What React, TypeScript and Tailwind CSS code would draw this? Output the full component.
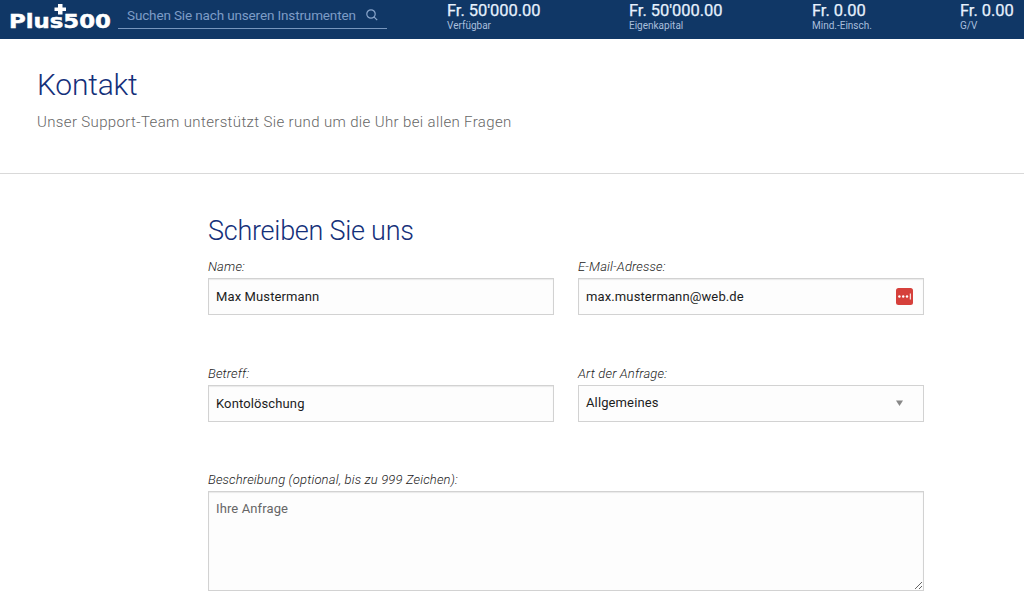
import { useState } from 'react'
import type { ReactNode } from 'react'

const balances = [
  { value: "Fr. 50'000.00", label: 'Verfügbar', width: 'w-[182px]' },
  { value: "Fr. 50'000.00", label: 'Eigenkapital', width: 'w-[183px]' },
  { value: 'Fr. 0.00', label: 'Mind.-Einsch.', width: 'w-[148px]' },
  { value: 'Fr. 0.00', label: 'G/V', width: 'w-[64px]' },
]

const inputClass =
  'block h-[37px] w-full rounded-none border border-[#d2d2d2] bg-[#fdfdfd] px-[7px] text-[13px] leading-[17px] tracking-[0.12px] text-[#1c1c1c] shadow-[inset_0_1px_1px_rgba(0,0,0,0.08)] outline-none'

function Logo() {
  return (
    <svg width="104" height="36" viewBox="0 0 104 36" className="shrink-0" aria-label="Plus500">
      <text
        x="-1"
        y="27.5"
        fill="#fff"
        stroke="#fff"
        strokeWidth="0.5"
        fontSize="20"
        fontWeight="700"
        fontFamily="'DejaVu Sans', sans-serif"
        textLength="102"
        lengthAdjust="spacingAndGlyphs"
      >
        Plus500
      </text>
      <path d="M48 4h4.5v3.5h3.5v3.5h-3.5v3.5h-4.5v-3.5h-3.5v-3.5h3.5z" fill="#fff" />
    </svg>
  )
}

function Field({ label, children }: { label: string; children: ReactNode }) {
  return (
    <label className="block">
      <span className="block h-[20px] text-[13px] font-light italic leading-[17px] tracking-[0.16px] text-[#222]">
        {label}
      </span>
      {children}
    </label>
  )
}

export default function App() {
  const [name, setName] = useState('Max Mustermann')
  const [email, setEmail] = useState('max.mustermann@web.de')
  const [subject, setSubject] = useState('Kontolöschung')

  return (
    <div className="h-[597px] w-[1024px] overflow-hidden bg-white font-['Roboto',sans-serif]">
      <header className="flex h-[39px] items-start bg-[#103766] pl-[10px]">
        <Logo />
        <div className="ml-[4px] flex h-[29px] w-[269px] items-center justify-between border-b border-[#7896bd] pl-[9px] pr-[9px] pt-[2px]">
          <span className="whitespace-nowrap text-[13.5px] tracking-[-0.14px] text-[#7d9cc6]">
            Suchen Sie nach unseren Instrumenten
          </span>
          <svg width="12" height="12" viewBox="0 0 12 12" fill="none" stroke="#8aa6cc" strokeWidth="1.2">
            <circle cx="5" cy="5" r="4.2" />
            <path d="M8.2 8.2L11.2 11.2" />
          </svg>
        </div>
        <div className="ml-[60px] flex">
          {balances.map((b) => (
            <div key={b.label} className={`${b.width} shrink-0 whitespace-nowrap`}>
              <div className="h-[20px] text-[16.5px] leading-[21px] tracking-[-0.05px] text-[#e6f1fd] [-webkit-text-stroke:0.25px_#e6f1fd]">
                {b.value}
              </div>
              <div className="text-[10px] leading-[12px] text-[#a9bfdd]">{b.label}</div>
            </div>
          ))}
        </div>
      </header>

      <section className="h-[135px] border-b border-[#d9d9d9] pl-[37px] pt-[28px]">
        <h1 className="text-[30px] font-light leading-[36px] tracking-[-0.2px] text-[#14307a]">Kontakt</h1>
        <p className="mt-[10px] text-[15px] font-light leading-[18px] tracking-[0.36px] text-[#666]">
          Unser Support-Team unterstützt Sie rund um die Uhr bei allen Fragen
        </p>
      </section>

      <main className="ml-[208px] w-[716px] pt-[41px]">
        <h2 className="h-[43px] text-[27px] font-light leading-[32px] tracking-[-0.25px] text-[#14307a]">
          Schreiben Sie uns
        </h2>
        <form className="grid grid-cols-2 gap-x-[24px] gap-y-[49.5px]">
          <Field label="Name:">
            <input className={inputClass} value={name} onChange={(e) => setName(e.target.value)} />
          </Field>
          <Field label="E-Mail-Adresse:">
            <div className="relative">
              <input className={inputClass} value={email} onChange={(e) => setEmail(e.target.value)} />
              {/* password manager badge */}
              <svg className="absolute right-[11px] top-[10px]" width="17" height="17" viewBox="0 0 17 17">
                <rect width="17" height="17" rx="2.5" fill="#d6403b" />
                <g fill="#fff">
                  <circle cx="3.4" cy="8.5" r="1.2" />
                  <circle cx="7.2" cy="8.5" r="1.2" />
                  <circle cx="11" cy="8.5" r="1.2" />
                  <rect x="13.8" y="5.5" width="1" height="6" />
                </g>
              </svg>
            </div>
          </Field>
          <Field label="Betreff:">
            <input className={inputClass} value={subject} onChange={(e) => setSubject(e.target.value)} />
          </Field>
          <Field label="Art der Anfrage:">
            <button
              type="button"
              className="flex h-[37px] w-full items-center justify-between border border-[#d2d2d2] bg-[#fdfdfd] pl-[7px] pr-[20px] text-[13px] tracking-[0.12px] text-[#1c1c1c]"
            >
              Allgemeines
              <svg width="7" height="6" viewBox="0 0 7 6">
                <path d="M0 0.5h7L3.5 6z" fill="#888" />
              </svg>
            </button>
          </Field>
          <div className="col-span-2">
            <Field label="Beschreibung (optional, bis zu 999 Zeichen):">
              <textarea
                className="block h-[100px] w-full resize rounded-none border border-[#d2d2d2] bg-[#fdfdfd] px-[7px] py-[8px] text-[13px] leading-[17px] tracking-[0.12px] shadow-[inset_0_1px_1px_rgba(0,0,0,0.08)] outline-none placeholder:text-[#666]"
                placeholder="Ihre Anfrage"
              />
            </Field>
          </div>
        </form>
      </main>
    </div>
  )
}
